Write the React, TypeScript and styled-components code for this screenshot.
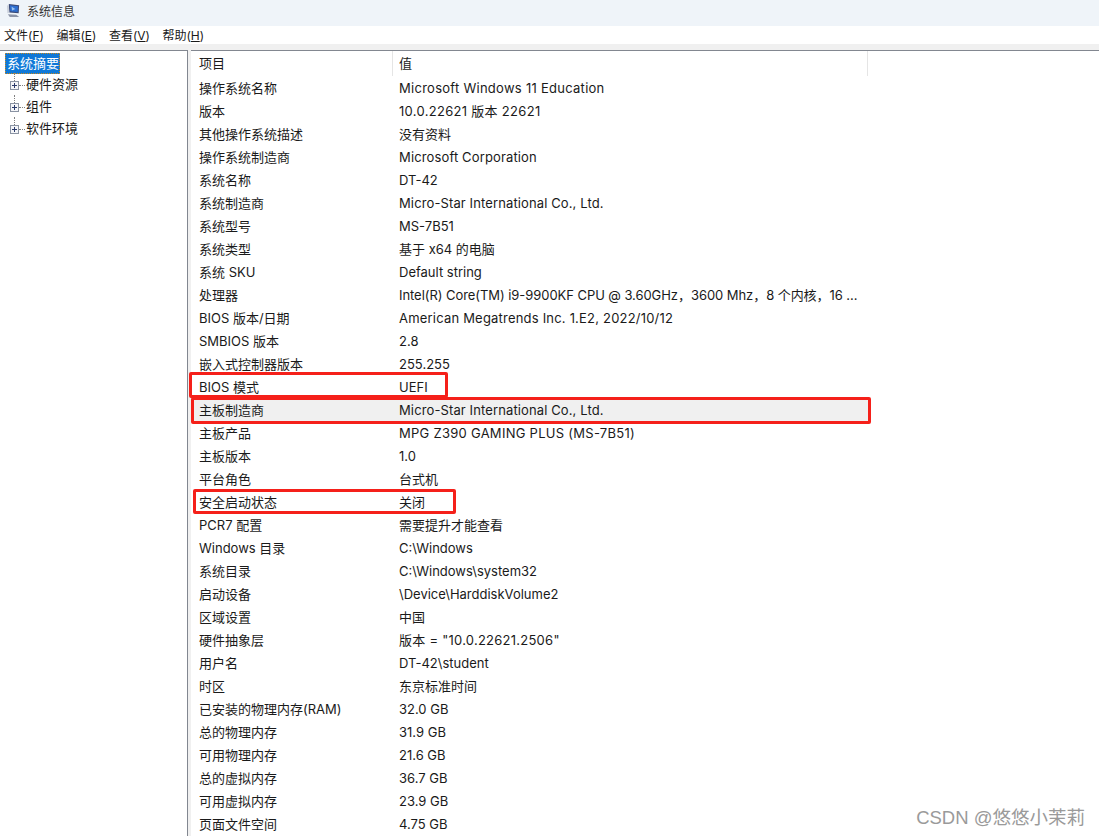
import React from "react";
import styled, { createGlobalStyle } from "styled-components";

const GlobalStyle = createGlobalStyle`
	html, body {
		margin: 0;
		padding: 0;
		background: #fff;
	}
`;

const Window = styled.div`
	position: relative;
	width: 1099px;
	height: 836px;
	overflow: hidden;
	display: flex;
	flex-direction: column;
	background: #fff;
	font-family: Inter, "Noto Sans CJK SC", sans-serif;
	font-size: 13px;
	color: #1a1a1a;
`;

const TitleBar = styled.div`
	display: flex;
	align-items: center;
	flex: 0 0 26px;
	gap: 6px;
	padding: 0 0 5px 6px;
	box-sizing: border-box;
	background: #eff4f9;
	font-size: 12px;
	color: #333;
`;

const MenuBar = styled.div`
	display: flex;
	align-items: center;
	flex: 0 0 18px;
	gap: 12.5px;
	padding: 1px 0 0 4px;
	box-sizing: border-box;
	background: #fff;
	font-size: 12px;
	line-height: 17px;

	u {
		text-underline-offset: 1px;
	}
`;

const Strip = styled.div`
	flex: 0 0 6px;
	background: #f0f0f0;
`;

const Body = styled.div`
	display: flex;
	flex: 1;
	min-height: 0;
`;

const TreePanel = styled.div`
	flex: 0 0 188px;
	box-sizing: border-box;
	border-top: 1px solid #828790;
	border-right: 1px solid #828790;
	padding: 2px 0 0 5px;
`;

const TreeSelected = styled.div`
	width: fit-content;
	height: 21px;
	line-height: 20px;
	padding: 0 1px 0 2px;
	box-sizing: border-box;
	background: #0f78d7;
	color: #fff;
	outline: 1px dotted #c98a1e;
	outline-offset: -1px;
`;

const TreeRow = styled.div`
	position: relative;
	display: flex;
	align-items: flex-start;
	height: 22px;
	line-height: 20px;
	gap: 7px;
	margin-left: 5px;

	/* dotted tree connectors */
	&::before {
		content: "";
		position: absolute;
		left: 4px;
		top: -1px;
		height: 12px;
		border-left: 1px dotted #808080;
	}

	&::after {
		content: "";
		position: absolute;
		left: 9px;
		top: 11px;
		width: 6px;
		border-top: 1px dotted #808080;
	}
`;

const PlusSvg = styled.svg`
	position: relative;
	z-index: 1;
	margin-top: 7px;
`;

const Splitter = styled.div`
	flex: 0 0 3px;
	background: #f0f0f0;
`;

const ListPanel = styled.div`
	flex: 1;
	min-width: 0;
	border-top: 1px solid #828790;
	padding-left: 2px;
`;

const HeaderRow = styled.div`
	display: flex;
	height: 25px;
	align-items: center;
`;

const HeaderCell = styled.div<{ $width: number; $line?: boolean }>`
	flex: 0 0 ${(p) => p.$width}px;
	box-sizing: border-box;
	height: 25px;
	line-height: 24px;
	padding-left: 6px;
	border-right: ${(p) => (p.$line ? "1px solid #e5e5e5" : "none")};
`;

const Row = styled.div<{ $active?: boolean }>`
	display: flex;
	width: 677px;
	height: 23px;
	line-height: 24px;
	background: ${(p) => (p.$active ? "#f0f0f0" : "transparent")};
`;

const NameCell = styled.div`
	flex: 0 0 200px;
	box-sizing: border-box;
	padding-left: 6px;
	white-space: nowrap;
`;

const ValueCell = styled.div<{ $track?: number }>`
	flex: 1;
	min-width: 0;
	padding-left: 6px;
	white-space: nowrap;
	letter-spacing: ${(p) => p.$track ?? 0}px;
`;

const Mark = styled.div<{ $x: number; $y: number; $w: number; $h: number }>`
	position: absolute;
	left: ${(p) => p.$x}px;
	top: ${(p) => p.$y}px;
	width: ${(p) => p.$w}px;
	height: ${(p) => p.$h}px;
	box-sizing: border-box;
	border: 3px solid #f5201a;
	border-radius: 2px;
`;

const Watermark = styled.div`
	position: absolute;
	right: 14px;
	bottom: 7px;
	font-family: "Liberation Sans", "Noto Sans CJK SC", sans-serif;
	font-size: 18.5px;
	color: #9a9a9a;
`;

const MonitorIcon = () => (
	<svg width="15" height="15" viewBox="0 0 16 16">
		<path d="M3 1 L14 2.5 L13.5 11 L3.5 10 Z" fill="#3a4a78" />
		<path d="M4.2 2.4 L12.8 3.5 L12.4 9.7 L4.6 8.9 Z" fill="#2f6fd0" />
		<path d="M6 4 L10 6.5 L6.5 8 Z" fill="#9cc4f0" />
		<path d="M2 12 L11 12.5 L14 15 L4 15 Z" fill="#8d95a8" />
		<path d="M1 3 L3 1.5 L3.5 10 L1.5 11 Z" fill="#c9cfdb" />
	</svg>
);

const PlusBox = () => (
	<PlusSvg width="9" height="9" viewBox="0 0 9 9">
		<rect x="0.5" y="0.5" width="8" height="8" fill="#f4f5f8" stroke="#8a93a3" />
		<path d="M2 4.5H7M4.5 2V7" stroke="#2a3a6a" />
	</PlusSvg>
);

// third field: letter spacing, Inter runs a bit narrower than the original UI font on some strings
const rows: [string, string, number?][] = [
	["操作系统名称", "Microsoft Windows 11 Education", 0.27],
	["版本", "10.0.22621 版本 22621", 0.3],
	["其他操作系统描述", "没有资料"],
	["操作系统制造商", "Microsoft Corporation", 0.14],
	["系统名称", "DT-42"],
	["系统制造商", "Micro-Star International Co., Ltd.", 0.12],
	["系统型号", "MS-7B51"],
	["系统类型", "基于 x64 的电脑"],
	["系统 SKU", "Default string"],
	["处理器", "Intel(R) Core(TM) i9-9900KF CPU @ 3.60GHz，3600 Mhz，8 个内核，16 ...", -0.06],
	["BIOS 版本/日期", "American Megatrends Inc. 1.E2, 2022/10/12", 0.2],
	["SMBIOS 版本", "2.8"],
	["嵌入式控制器版本", "255.255"],
	["BIOS 模式", "UEFI"],
	["主板制造商", "Micro-Star International Co., Ltd.", 0.12],
	["主板产品", "MPG Z390 GAMING PLUS (MS-7B51)", 0.27],
	["主板版本", "1.0"],
	["平台角色", "台式机"],
	["安全启动状态", "关闭"],
	["PCR7 配置", "需要提升才能查看"],
	["Windows 目录", "C:\\Windows"],
	["系统目录", "C:\\Windows\\system32"],
	["启动设备", "\\Device\\HarddiskVolume2"],
	["区域设置", "中国"],
	["硬件抽象层", "版本 = \"10.0.22621.2506\"", 0.25],
	["用户名", "DT-42\\student"],
	["时区", "东京标准时间"],
	["已安装的物理内存(RAM)", "32.0 GB"],
	["总的物理内存", "31.9 GB"],
	["可用物理内存", "21.6 GB"],
	["总的虚拟内存", "36.7 GB"],
	["可用虚拟内存", "23.9 GB"],
	["页面文件空间", "4.75 GB"],
];

export default function App() {
	return (
		<Window>
			<GlobalStyle />
			<TitleBar>
				<MonitorIcon />
				<span>系统信息</span>
			</TitleBar>
			<MenuBar>
				<span>文件(<u>F</u>)</span>
				<span>编辑(<u>E</u>)</span>
				<span>查看(<u>V</u>)</span>
				<span>帮助(<u>H</u>)</span>
			</MenuBar>
			<Strip />
			<Body>
				<TreePanel>
					<TreeSelected>系统摘要</TreeSelected>
					{["硬件资源", "组件", "软件环境"].map((t) => (
						<TreeRow key={t}>
							<PlusBox />
							<span>{t}</span>
						</TreeRow>
					))}
				</TreePanel>
				<Splitter />
				<ListPanel>
					<HeaderRow>
						<HeaderCell $width={200} $line>项目</HeaderCell>
						<HeaderCell $width={475} $line>值</HeaderCell>
					</HeaderRow>
					{rows.map(([name, value, track]) => (
						<Row key={name} $active={name === "主板制造商"}>
							<NameCell>{name}</NameCell>
							<ValueCell $track={track}>{value}</ValueCell>
						</Row>
					))}
				</ListPanel>
			</Body>
			<Mark $x={189} $y={372} $w={259} $h={26} />
			<Mark $x={191} $y={397} $w={680} $h={27} />
			<Mark $x={193} $y={489} $w={263} $h={25} />
			<Watermark>CSDN @悠悠小茉莉</Watermark>
		</Window>
	);
}
